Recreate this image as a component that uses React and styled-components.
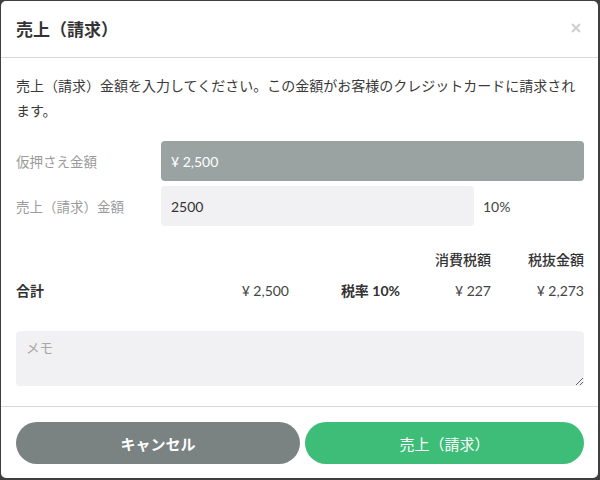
import React from "react";
import styled, { createGlobalStyle } from "styled-components";

const GlobalStyle = createGlobalStyle`
  html, body {
    margin: 0;
    height: 100%;
    background: #3f3f3f;
  }
  body {
    font-family: "Lato", "Noto Sans CJK JP", sans-serif;
    color: #333;
  }
  * {
    box-sizing: border-box;
  }
`;

const App = () => {
  return (
    <>
      <GlobalStyle />
      <Modal>
        <Header>
          <Title>売上（請求）</Title>
          <Close aria-label="close">
            <svg width="10" height="10" viewBox="0 0 10 10">
              <path d="M1 1 L9 9 M9 1 L1 9" stroke="#cfcfcf" strokeWidth="2" />
            </svg>
          </Close>
        </Header>
        <Body>
          <Description>
            売上（請求）金額を入力してください。この金額がお客様のクレジットカードに請求されます。
          </Description>
          <Form>
            <Row>
              <Label>仮押さえ金額</Label>
              <Field $disabled>¥ 2,500</Field>
            </Row>
            <Row>
              <Label>売上（請求）金額</Label>
              <Input defaultValue="2500" />
              <Suffix>10%</Suffix>
            </Row>
          </Form>
          <Summary>
            <Cell />
            <Cell />
            <Cell />
            <HeadCell>消費税額</HeadCell>
            <HeadCell>税抜金額</HeadCell>
            <Cell $left $bold>
              合計
            </Cell>
            <Cell>¥ 2,500</Cell>
            <Cell $bold>税率 10%</Cell>
            <Cell>¥ 227</Cell>
            <Cell>¥ 2,273</Cell>
          </Summary>
          <Memo placeholder="メモ" />
        </Body>
        <Footer>
          <Button $variant="cancel">キャンセル</Button>
          <Button $variant="submit">売上（請求）</Button>
        </Footer>
      </Modal>
    </>
  );
};

export default App;

const Modal = styled.div`
  display: flex;
  flex-direction: column;
  width: 597px;
  height: 477px;
  margin: 1px 0 0 1px;
  background: #fff;
  border-radius: 5px;
  overflow: hidden;
`;

const Header = styled.div`
  display: flex;
  align-items: center;
  justify-content: space-between;
  height: 57px;
  padding: 0 17px 2px 15px;
  border-bottom: 1px solid #d9d9d9;
`;

const Title = styled.h1`
  margin: 0;
  font-size: 17px;
  font-weight: 700;
  color: #333;
`;

const Close = styled.button`
  display: flex;
  padding: 0;
  border: none;
  background: none;
`;

const Body = styled.div`
  padding: 15px 14px 20px 15px;
  border-bottom: 1px solid #d9d9d9;
`;

const Description = styled.p`
  margin: 0;
  font-size: 14px;
  line-height: 25px;
  color: #3a3a3a;
`;

const Form = styled.div`
  display: flex;
  flex-direction: column;
  gap: 5px;
  margin-top: 18px;
`;

const Row = styled.div`
  display: flex;
  align-items: center;
`;

const Label = styled.div`
  width: 145px;
  flex: none;
  font-size: 13.5px;
  color: #9a9a9a;
`;

const Field = styled.div`
  flex: 1;
  display: flex;
  align-items: center;
  height: 40px;
  padding: 0 10px;
  border-radius: 4px;
  font-size: 14px;
  color: ${(p) => (p.$disabled ? "#fff" : "#333")};
  background: ${(p) => (p.$disabled ? "#9aa2a2" : "#f1f1f3")};
`;

const Input = styled.input`
  flex: 1;
  min-width: 0;
  height: 40px;
  padding: 0 10px;
  border: none;
  border-radius: 4px;
  outline: none;
  background: #f1f1f3;
  font-family: inherit;
  font-size: 14px;
  color: #333;
`;

const Suffix = styled.div`
  width: 110px;
  flex: none;
  padding-left: 9px;
  font-size: 14px;
  color: #444;
`;

const Summary = styled.div`
  display: grid;
  grid-template-columns: 1fr 130px 111px 91px 93px;
  grid-auto-rows: 20px;
  row-gap: 11px;
  align-items: center;
  margin-top: 23px;
`;

const Cell = styled.div`
  text-align: ${(p) => (p.$left ? "left" : "right")};
  font-size: 14px;
  font-weight: ${(p) => (p.$bold ? 700 : 400)};
  color: ${(p) => (p.$bold ? "#333" : "#444")};
  white-space: nowrap;
`;

const HeadCell = styled(Cell)`
  font-weight: 500;
  color: #333;
`;

const Memo = styled.textarea`
  display: block;
  width: 100%;
  height: 55px;
  margin-top: 31px;
  padding: 6px 10px;
  border: none;
  border-radius: 4px;
  outline: none;
  background: #f1f1f3;
  font-family: inherit;
  font-size: 13.5px;
  color: #333;

  &::placeholder {
    color: #a8a8a8;
  }
`;

const Footer = styled.div`
  display: grid;
  grid-template-columns: 284px 1fr;
  gap: 5px;
  padding: 15px 14px 0 15px;
`;

const Button = styled.button`
  height: 42px;
  border: none;
  border-radius: 21px;
  font-family: inherit;
  font-size: 15px;
  font-weight: ${(p) => (p.$variant === "cancel" ? 700 : 400)};
  color: #fff;
  background: ${(p) => (p.$variant === "cancel" ? "#7a8282" : "#3dbd78")};
  cursor: pointer;
`;
